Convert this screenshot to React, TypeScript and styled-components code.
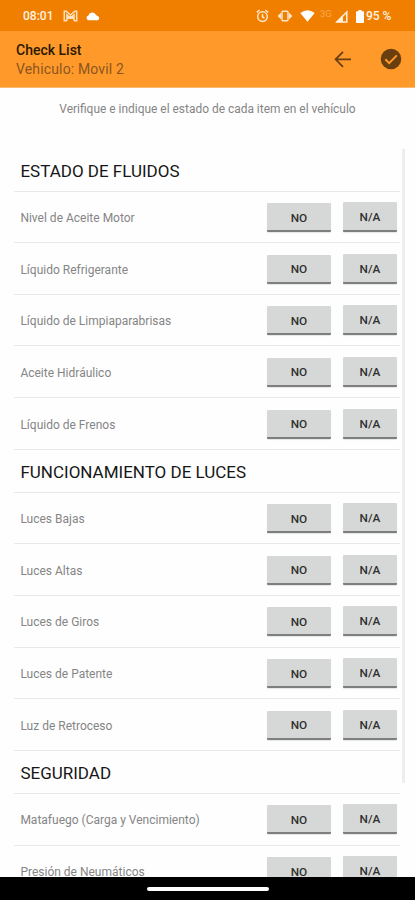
import React from 'react';
import styled, { createGlobalStyle } from 'styled-components';

const GlobalStyle = createGlobalStyle`
  * { box-sizing: border-box; }
  body { margin: 0; background: #fefefe; font-family: Roboto, sans-serif; }
`;

const Screen = styled.main`
  width: 415px;
  height: 900px;
  display: flex;
  flex-direction: column;
  overflow: hidden;
  background: #fefefe;
`;

const StatusBar = styled.header`
  flex: 0 0 31px;
  display: flex;
  align-items: center;
  padding: 1px 21px 0 23px;
  background: #f07f00;
  color: #fff3e0;
  font-size: 12px;
  font-weight: 500;
`;

const Clock = styled.span`
  width: 40px;
`;

const StatusIcon = styled.svg<{ $gap?: number }>`
  display: block;
  flex: none;
  margin-right: ${(p) => p.$gap ?? 0}px;
`;

const StatusRight = styled.div`
  display: flex;
  align-items: center;
  margin-left: auto;
`;

const Network = styled.span`
  width: 15px;
  font-size: 9.5px;
  font-weight: 400;
  line-height: 10px;
  margin-top: -5px;
  color: #f7a850;
`;

const Battery = styled.span`
  width: 28px;
  white-space: nowrap;
`;

const AppBar = styled.div`
  flex: 0 0 57px;
  display: flex;
  align-items: center;
  padding: 0 13px 0 16px;
  background: #ff9a2a;
  border-bottom: 1px solid #fdbc72;
`;

const Titles = styled.div`
  flex: 1;
  padding-top: 2px;
`;

const Title = styled.h1`
  margin: 0;
  font-size: 14px;
  line-height: 19px;
  font-weight: 500;
  color: #2b1800;
`;

const Subtitle = styled.div`
  font-size: 14px;
  line-height: 19px;
  letter-spacing: 0.15px;
  color: #8b5520;
`;

const BarButton = styled.button`
  display: flex;
  padding: 0;
  margin-left: 25px;
  border: 0;
  background: none;
  color: #6a3f10;
`;

const Hint = styled.p`
  flex: 0 0 60.5px;
  margin: 0;
  padding-top: 13px;
  text-align: center;
  font-size: 11.95px;
  line-height: 16px;
  color: #858585;
`;

const ListArea = styled.div`
  flex: 1;
  min-height: 0;
  display: flex;
  align-items: flex-start;
  padding-left: 14px;
  overflow: hidden;
`;

const List = styled.div`
  width: 386px;
  margin-right: 2px;
`;

const ScrollThumb = styled.div`
  width: 3px;
  height: 634px;
  background: #ededed;
`;

const Heading = styled.h2`
  display: flex;
  align-items: center;
  height: 43px;
  margin: 0;
  padding: 3px 0 0 6.4px;
  border-bottom: 1px solid #e9e9e9;
  font-size: 17px;
  font-weight: 400;
  color: #161616;
`;

const Row = styled.div`
  display: flex;
  align-items: flex-start;
  height: 51.65px;
  padding: 10.5px 3px 0 6.4px;
  border-bottom: 1px solid #e9e9e9;
`;

const Label = styled.span`
  flex: 1;
  font-size: 12px;
  line-height: 33px;
  color: #858585;
`;

const Choice = styled.button<{ $wide?: boolean }>`
  width: ${(p) => (p.$wide ? 64 : 54)}px;
  height: ${(p) => (p.$wide ? 29 : 30)}px;
  margin: ${(p) => (p.$wide ? '1px 12px 0 0' : '0')};
  padding: 2px 0 0;
  border: 0;
  border-bottom: 2px solid #7d7f7f;
  border-radius: 1px;
  background: #d6d8d7;
  box-shadow: 0 1px 1px #e6e6e6;
  font: 500 11.8px Roboto, sans-serif;
  color: #303030;
`;

const NavBar = styled.footer`
  flex: 0 0 23px;
  display: flex;
  justify-content: center;
  padding-top: 10px;
  background: #000;
`;

const NavHandle = styled.div`
  width: 122px;
  height: 4px;
  border-radius: 2px;
  background: #fff;
`;

const sections = [
  {
    title: 'ESTADO DE FLUIDOS',
    items: ['Nivel de Aceite Motor', 'Líquido Refrigerante', 'Líquido de Limpiaparabrisas', 'Aceite Hidráulico', 'Líquido de Frenos'],
  },
  {
    title: 'FUNCIONAMIENTO DE LUCES',
    items: ['Luces Bajas', 'Luces Altas', 'Luces de Giros', 'Luces de Patente', 'Luz de Retroceso'],
  },
  { title: 'SEGURIDAD', items: ['Matafuego (Carga y Vencimiento)', 'Presión de Neumáticos'] },
];

export default function App() {
  return (
    <Screen>
      <GlobalStyle />
      <StatusBar>
        <Clock>08:01</Clock>
        <StatusIcon $gap={8} width="15" height="12" viewBox="0 0 15 12" fill="none" stroke="#ffe2bd" strokeWidth="1.5">
          <path d="M4 10.7H1.3V1.3H3.2L7.5 5l4.3-3.7h1.9v9.4H11M4 10.7V5l3.5 3L11 5v5.7M4 8.5l3.5-2L11 8.5" />
        </StatusIcon>
        <StatusIcon width="14" height="10" viewBox="0 0 14 10" fill="#fff">
          <path d="M2.5 9.3A2.4 2.4 0 0 1 2.4 4.6 4 4 0 0 1 9.7 3.4 3 3 0 0 1 11.2 5 2.2 2.2 0 0 1 11.6 9.3Z" />
        </StatusIcon>
        <StatusRight>
          <StatusIcon $gap={8} width="13" height="14" viewBox="0 0 13 14" fill="none" stroke="#ffe6c8" strokeWidth="1.5">
            <circle cx="6.5" cy="7.6" r="4.8" />
            <path d="M.8 3.3 3.6 1M12.2 3.3 9.4 1M6.5 5v3l2 1.2" />
          </StatusIcon>
          <StatusIcon $gap={7} width="16" height="12" viewBox="0 0 16 12" fill="none" stroke="#ffe6c8" strokeWidth="1.5">
            <rect x="5" y="1.3" width="6" height="9.4" rx="1" />
            <path fill="#ffe6c8" stroke="none" d="M4 2.7v6.6L.5 6ZM12 2.7v6.6L15.5 6Z" />
          </StatusIcon>
          <StatusIcon $gap={5} width="15" height="12" viewBox="0 0 15 12" fill="#fff">
            <path d="M.3 3Q7.5-2.5 14.7 3L7.5 11.8Z" />
          </StatusIcon>
          <Network>3G</Network>
          <StatusIcon $gap={8} width="13" height="13" viewBox="0 0 13 13" fill="none" stroke="#fff0dc" strokeWidth="1.5">
            <path d="M2 11.9 11.8 2V11.9Z" />
            <path fill="#fff0dc" stroke="none" d="M1 12.3 8 5.3V12.3Z" />
          </StatusIcon>
          <StatusIcon $gap={2} width="8" height="13" viewBox="0 0 8 13" fill="#fff">
            <path d="M2.5 0h3v1.3H7.2Q8 1.3 8 2.1V12.2Q8 13 7.2 13H.8Q0 13 0 12.2V2.1Q0 1.3.8 1.3H2.5Z" />
          </StatusIcon>
          <Battery>95 %</Battery>
        </StatusRight>
      </StatusBar>
      <AppBar>
        <Titles>
          <Title>Check List</Title>
          <Subtitle>Vehiculo: Movil 2</Subtitle>
        </Titles>
        <BarButton aria-label="Volver">
          <svg width="24" height="24" viewBox="0 0 24 24" fill="none" stroke="currentColor" strokeWidth="1.8">
            <path d="M20 12.3H5M12 4.8 4.6 12.3 12 19.8" />
          </svg>
        </BarButton>
        <BarButton aria-label="Confirmar">
          <svg width="22" height="22" viewBox="0 0 22 22">
            <circle cx="11" cy="11" r="10.3" fill="currentColor" />
            <path d="M5.3 11.3 9.2 15.1 16.8 7.4" fill="none" stroke="#ff9a2a" strokeWidth="2" />
          </svg>
        </BarButton>
      </AppBar>
      <Hint>Verifique e indique el estado de cada item en el vehículo</Hint>
      <ListArea>
        <List>
          {sections.map((section) => (
            <section key={section.title}>
              <Heading>{section.title}</Heading>
              {section.items.map((item) => (
                <Row key={item}>
                  <Label>{item}</Label>
                  <Choice $wide>NO</Choice>
                  <Choice>N/A</Choice>
                </Row>
              ))}
            </section>
          ))}
        </List>
        <ScrollThumb />
      </ListArea>
      <NavBar>
        <NavHandle />
      </NavBar>
    </Screen>
  );
}
